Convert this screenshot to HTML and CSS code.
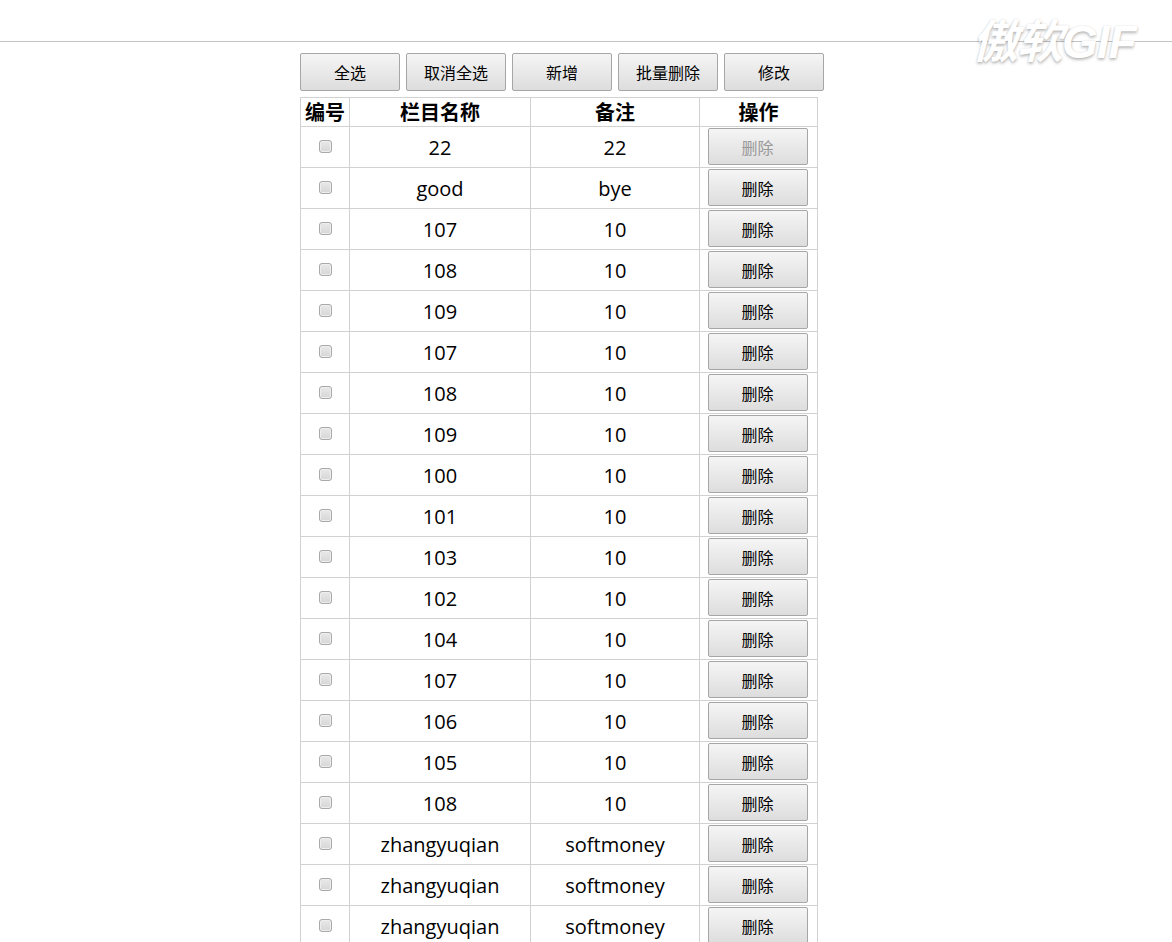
FILE: index.html
```html
<!DOCTYPE html>
<html lang="zh-CN">
<head>
<meta charset="utf-8">
<title>栏目管理</title>
<link rel="stylesheet" href="styles.css">
</head>
<body>
<div class="topbar"></div>
<div class="watermark">傲软GIF</div>
<div class="main">
  <div class="toolbar">
    <button class="btn">全选</button>
    <button class="btn">取消全选</button>
    <button class="btn">新增</button>
    <button class="btn">批量删除</button>
    <button class="btn">修改</button>
  </div>
  <table class="grid">
    <colgroup>
      <col class="c-id"><col class="c-name"><col class="c-note"><col class="c-op">
    </colgroup>
    <thead>
      <tr><th>编号</th><th>栏目名称</th><th>备注</th><th>操作</th></tr>
    </thead>
    <tbody>
      <tr><td><input type="checkbox" class="chk"></td><td>22</td><td>22</td><td><button class="del" disabled>删除</button></td></tr>
      <tr><td><input type="checkbox" class="chk"></td><td>good</td><td>bye</td><td><button class="del">删除</button></td></tr>
      <tr><td><input type="checkbox" class="chk"></td><td>107</td><td>10</td><td><button class="del">删除</button></td></tr>
      <tr><td><input type="checkbox" class="chk"></td><td>108</td><td>10</td><td><button class="del">删除</button></td></tr>
      <tr><td><input type="checkbox" class="chk"></td><td>109</td><td>10</td><td><button class="del">删除</button></td></tr>
      <tr><td><input type="checkbox" class="chk"></td><td>107</td><td>10</td><td><button class="del">删除</button></td></tr>
      <tr><td><input type="checkbox" class="chk"></td><td>108</td><td>10</td><td><button class="del">删除</button></td></tr>
      <tr><td><input type="checkbox" class="chk"></td><td>109</td><td>10</td><td><button class="del">删除</button></td></tr>
      <tr><td><input type="checkbox" class="chk"></td><td>100</td><td>10</td><td><button class="del">删除</button></td></tr>
      <tr><td><input type="checkbox" class="chk"></td><td>101</td><td>10</td><td><button class="del">删除</button></td></tr>
      <tr><td><input type="checkbox" class="chk"></td><td>103</td><td>10</td><td><button class="del">删除</button></td></tr>
      <tr><td><input type="checkbox" class="chk"></td><td>102</td><td>10</td><td><button class="del">删除</button></td></tr>
      <tr><td><input type="checkbox" class="chk"></td><td>104</td><td>10</td><td><button class="del">删除</button></td></tr>
      <tr><td><input type="checkbox" class="chk"></td><td>107</td><td>10</td><td><button class="del">删除</button></td></tr>
      <tr><td><input type="checkbox" class="chk"></td><td>106</td><td>10</td><td><button class="del">删除</button></td></tr>
      <tr><td><input type="checkbox" class="chk"></td><td>105</td><td>10</td><td><button class="del">删除</button></td></tr>
      <tr><td><input type="checkbox" class="chk"></td><td>108</td><td>10</td><td><button class="del">删除</button></td></tr>
      <tr><td><input type="checkbox" class="chk"></td><td>zhangyuqian</td><td>softmoney</td><td><button class="del">删除</button></td></tr>
      <tr><td><input type="checkbox" class="chk"></td><td>zhangyuqian</td><td>softmoney</td><td><button class="del">删除</button></td></tr>
      <tr><td><input type="checkbox" class="chk"></td><td>zhangyuqian</td><td>softmoney</td><td><button class="del">删除</button></td></tr>
    </tbody>
  </table>
</div>
</body>
</html>
```
FILE: styles.css
```css
html, body {
  margin: 0;
  padding: 0;
  background: #fff;
}
body {
  font-family: "Open Sans", "Noto Sans CJK SC", sans-serif;
  color: #000;
  overflow: hidden;
}
.topbar {
  height: 41px;
  border-bottom: 1px solid #c3c3c3;
}
.watermark {
  position: absolute;
  top: 5px;
  left: 972px;
  font-family: "Liberation Sans", "Noto Sans CJK SC", sans-serif;
  font-size: 46px;
  font-weight: 700;
  font-style: italic;
  letter-spacing: -1px;
  color: #fff;
  text-shadow: 0 2px 3px rgba(0,0,0,0.25), 0 0 2px rgba(0,0,0,0.12);
}
.main {
  margin-left: 300px;
  padding-top: 11px;
}
.toolbar {
  display: flex;
  gap: 6px;
}
.btn, .del {
  font-family: "Noto Sans CJK SC", sans-serif;
  font-size: 16px;
  color: #000;
  background: linear-gradient(#f5f5f5, #dddddd);
  border: 1px solid #a6a6a6;
  border-radius: 2px;
  padding: 0;
  margin: 0;
}
.btn {
  width: 100px;
  height: 38px;
}
.grid {
  margin-top: 6px;
  border-collapse: collapse;
  table-layout: fixed;
  width: 517px;
}
.c-id { width: 49px; }
.c-name { width: 181px; }
.c-note { width: 169px; }
.c-op { width: 118px; }
.grid th, .grid td {
  border: 1px solid #d2d2d2;
  text-align: center;
  padding: 0;
}
.grid th {
  font-family: "Noto Sans CJK SC", sans-serif;
  font-size: 20px;
  font-weight: 700;
  height: 28px;
  line-height: 28px;
}
.grid td {
  font-size: 20px;
  height: 39px;
  line-height: 24px;
  padding-top: 1px;
}
.chk {
  appearance: none;
  -webkit-appearance: none;
  width: 13px;
  height: 13px;
  margin: 0;
  border: 1px solid #a9a9a9;
  border-radius: 3px;
  background: linear-gradient(#e9e9e9, #d6d6d6);
  box-shadow: inset 0 0 0 1px #eeeeee;
  vertical-align: middle;
  position: relative;
  top: -3px;
}
.del {
  width: 100px;
  height: 37px;
  display: block;
  margin: 0 auto;
  position: relative;
  left: -1px;
  top: -1px;
}
.del:disabled {
  color: #999;
}
```
